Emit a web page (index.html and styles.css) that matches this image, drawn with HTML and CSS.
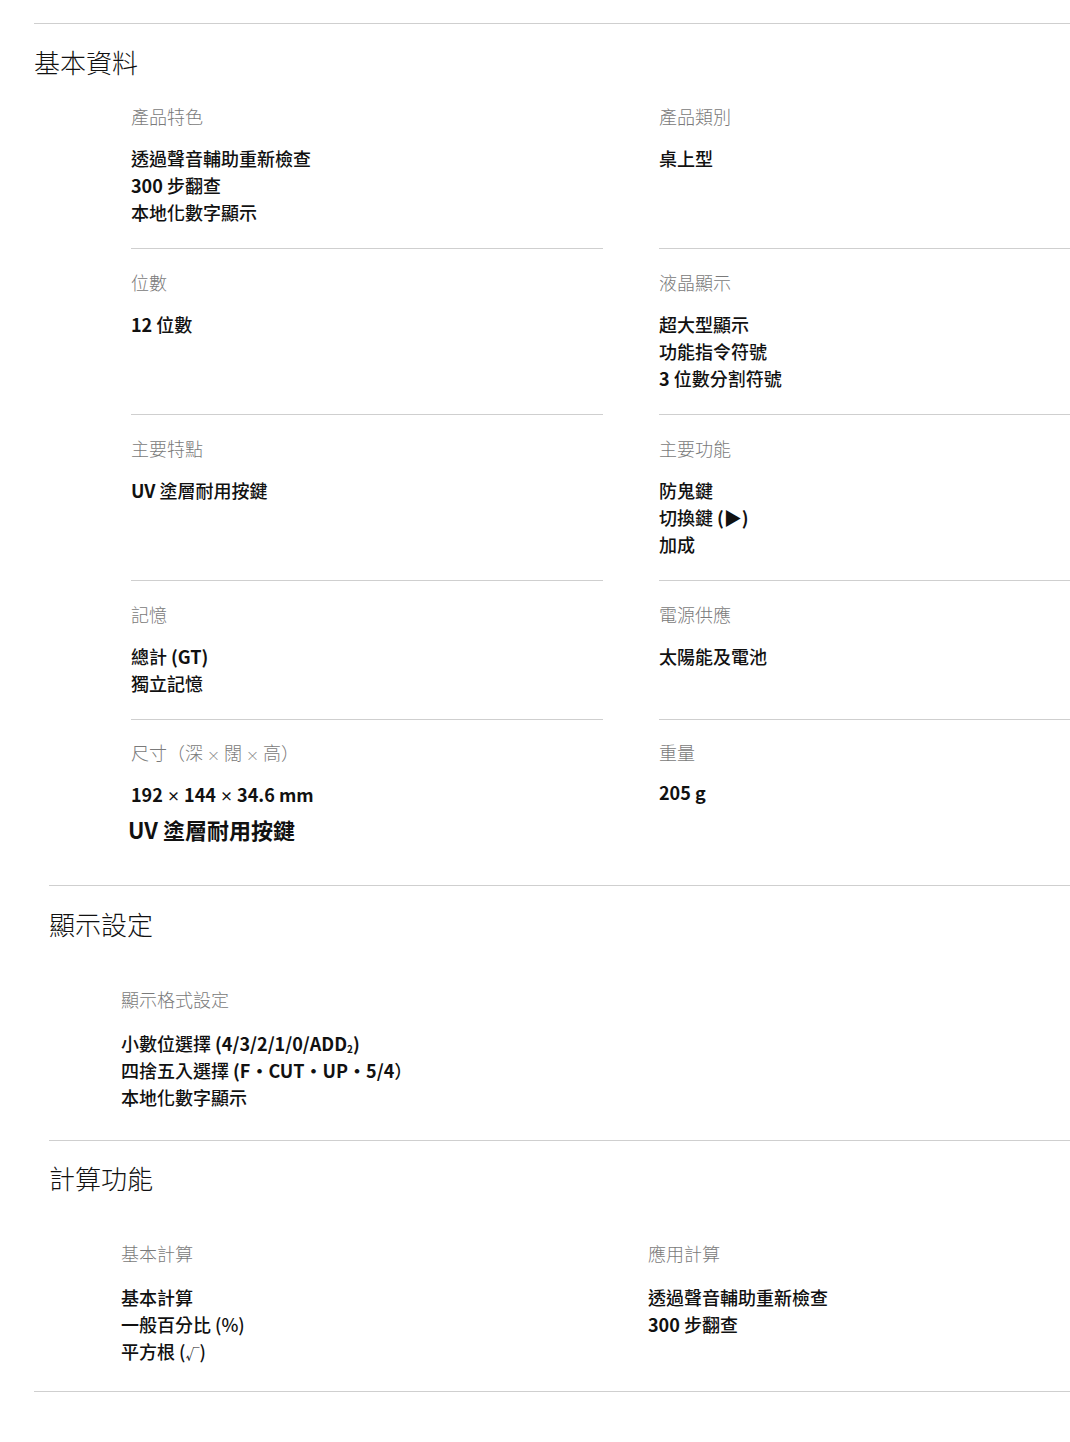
FILE: index.html
```html
<!DOCTYPE html>
<html lang="zh-Hant">
<head>
<meta charset="utf-8">
<title>規格</title>
<link rel="stylesheet" href="styles.css">
</head>
<body>
<div class="specs">
  <section class="block block-main">
    <h2 class="block-title">基本資料</h2>
    <div class="grid grid-main">
      <div class="cell line">
        <div class="label">產品特色</div>
        <ul class="values"><li>透過聲音輔助重新檢查</li><li><span class="en">300</span> 步翻查</li><li>本地化數字顯示</li></ul>
      </div>
      <div class="cell line">
        <div class="label">產品類別</div>
        <ul class="values"><li>桌上型</li></ul>
      </div>
      <div class="cell line">
        <div class="label">位數</div>
        <ul class="values"><li><span class="en">12</span> 位數</li></ul>
      </div>
      <div class="cell line">
        <div class="label">液晶顯示</div>
        <ul class="values"><li>超大型顯示</li><li>功能指令符號</li><li><span class="en">3</span> 位數分割符號</li></ul>
      </div>
      <div class="cell line">
        <div class="label">主要特點</div>
        <ul class="values"><li><span class="en">UV</span> 塗層耐用按鍵</li></ul>
      </div>
      <div class="cell line">
        <div class="label">主要功能</div>
        <ul class="values"><li>防鬼鍵</li><li>切換鍵 <span class="en">(▶)</span></li><li>加成</li></ul>
      </div>
      <div class="cell line">
        <div class="label">記憶</div>
        <ul class="values"><li>總計 <span class="en">(GT)</span></li><li>獨立記憶</li></ul>
      </div>
      <div class="cell line">
        <div class="label">電源供應</div>
        <ul class="values"><li>太陽能及電池</li></ul>
      </div>
      <div class="cell cell-last">
        <div class="label">尺寸（深 <span class="x">×</span> 闊 <span class="x">×</span> 高）</div>
        <ul class="values"><li class="en">192 <span class="vx">×</span> 144 <span class="vx">×</span> 34.6 mm</li></ul>
        <h3 class="feature">UV 塗層耐用按鍵</h3>
      </div>
      <div class="cell cell-last">
        <div class="label">重量</div>
        <ul class="values"><li class="en">205 g</li></ul>
      </div>
    </div>
  </section>

  <section class="block block-sub block-display">
    <h2 class="block-title">顯示設定</h2>
    <div class="grid grid-sub">
      <div class="cell">
        <div class="label">顯示格式設定</div>
        <ul class="values"><li>小數位選擇 <span class="en">(4/3/2/1/0/ADD<sub>2</sub>)</span></li><li>四捨五入選擇 <span class="en">(F・CUT・UP・5/4</span>）</li><li>本地化數字顯示</li></ul>
      </div>
    </div>
  </section>

  <section class="block block-sub block-calc">
    <h2 class="block-title">計算功能</h2>
    <div class="grid grid-sub">
      <div class="cell">
        <div class="label">基本計算</div>
        <ul class="values"><li>基本計算</li><li>一般百分比 (%)</li><li>平方根 (<span class="root">√</span>)</li></ul>
      </div>
      <div class="cell">
        <div class="label">應用計算</div>
        <ul class="values"><li>透過聲音輔助重新檢查</li><li><span class="en">300</span> 步翻查</li></ul>
      </div>
    </div>
  </section>
</div>
</body>
</html>
```

FILE: styles.css
```css
html, body {
  margin: 0;
  padding: 0;
  background: #fff;
}

body {
  font-family: "Noto Sans CJK TC", "Noto Sans", sans-serif;
  color: #111;
  overflow-x: hidden;
}

.specs {
  margin: 23px 0 0 34px;
  border-top: 1px solid #cfcfcf;
  border-bottom: 1px solid #cfcfcf;
  width: 1036px;
}

.block-title {
  margin: 0;
  font-size: 26px;
  line-height: 36px;
  font-weight: 300;
  color: #111;
}

.block-main {
  padding-top: 20px;
}

.block-main .block-title {
  margin-bottom: 3px;
}

.block-sub {
  margin-left: 15px;
  border-top: 1px solid #cfcfcf;
}

.block-sub .block-title {
  margin-bottom: 44px;
}

.block-display {
  margin-top: 40px;
  padding-top: 20px;
  padding-bottom: 29px;
}

.block-calc {
  padding-top: 19px;
  padding-bottom: 26px;
}

.grid {
  display: grid;
  grid-template-columns: 472px 1fr;
  column-gap: 55px;
}

.grid-main {
  padding-left: 97px;
  column-gap: 56px;
}

.grid-sub {
  padding-left: 72px;
}

.cell {
  padding-top: 20px;
}

.grid-sub .cell {
  padding-top: 0;
}

.grid-sub .values {
  margin-top: 17px;
}

.cell.line {
  padding-bottom: 22px;
  border-bottom: 1px solid #cfcfcf;
}

.cell-last {
  padding-top: 19px;
}

.cell-last .values {
  margin-top: 13px;
}

.label {
  font-size: 18px;
  line-height: 27px;
  font-weight: 300;
  color: #7a7a7a;
}

.x {
  font-size: 13px;
}

.values {
  list-style: none;
  margin: 15px 0 0;
  padding: 0;
  font-size: 18px;
  line-height: 27px;
  font-weight: 500;
  color: #111;
}

.values li {
  height: 27px;
}

.en {
  font-weight: 700;
}

.vx {
  font-size: 13px;
  font-weight: 700;
  vertical-align: 1px;
}

.root {
  font-size: 14px;
  font-weight: 400;
  line-height: 0;
}

.values sub {
  font-size: 10px;
  line-height: 0;
  vertical-align: -2px;
}

.feature {
  margin: 5px 0 0 -3px;
  font-size: 22px;
  line-height: 32px;
  font-weight: 700;
  color: #111;
}
```
